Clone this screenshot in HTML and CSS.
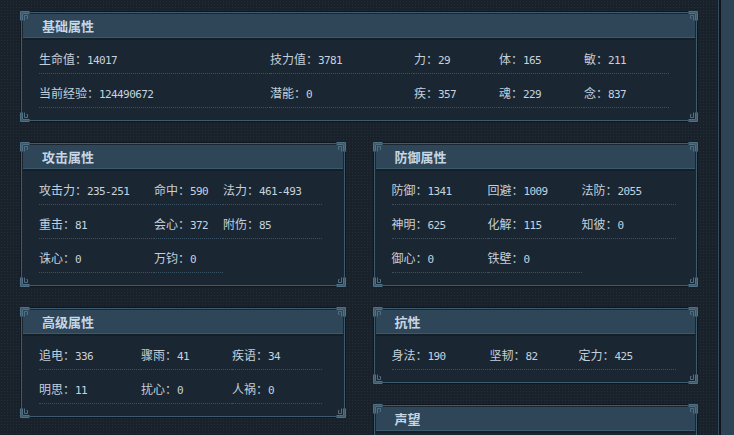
FILE: index.html
```html
<!DOCTYPE html>
<html lang="zh">
<head>
<meta charset="utf-8">
<title>属性</title>
<link rel="stylesheet" href="styles.css">
</head>
<body>
<svg class="defs" width="0" height="0">
  <symbol id="fret" viewBox="0 0 10 10">
    <path d="M0.5 9.5V0.5H9.5M2.5 9.5V2.5H9.5M4.5 9.5V4.5H7.5V7.5H6.5" fill="none" stroke="#4f7085" stroke-width="1"/>
  </symbol>
</svg>
<div class="page">
  <div class="main">
    <section class="panel">
      <svg class="corner tl"><use href="#fret"/></svg><svg class="corner tr"><use href="#fret"/></svg><svg class="corner bl"><use href="#fret"/></svg><svg class="corner br"><use href="#fret"/></svg>
      <h2 class="ph">基础属性</h2>
      <div class="grid g-basic">
        <div class="cell"><span class="k">生命值：</span><span class="v">14017</span></div>
        <div class="cell"><span class="k">技力值：</span><span class="v">3781</span></div>
        <div class="cell"><span class="k">力：</span><span class="v">29</span></div>
        <div class="cell"><span class="k">体：</span><span class="v">165</span></div>
        <div class="cell"><span class="k">敏：</span><span class="v">211</span></div>
        <div class="cell"><span class="k">当前经验：</span><span class="v">124490672</span></div>
        <div class="cell"><span class="k">潜能：</span><span class="v">0</span></div>
        <div class="cell"><span class="k">疾：</span><span class="v">357</span></div>
        <div class="cell"><span class="k">魂：</span><span class="v">229</span></div>
        <div class="cell"><span class="k">念：</span><span class="v">837</span></div>
      </div>
    </section>
    <div class="cols">
      <div class="col">
        <section class="panel">
          <svg class="corner tl"><use href="#fret"/></svg><svg class="corner tr"><use href="#fret"/></svg><svg class="corner bl"><use href="#fret"/></svg><svg class="corner br"><use href="#fret"/></svg>
          <h2 class="ph">攻击属性</h2>
          <div class="grid g-attack">
            <div class="cell"><span class="k">攻击力：</span><span class="v">235-251</span></div>
            <div class="cell"><span class="k">命中：</span><span class="v">590</span></div>
            <div class="cell"><span class="k">法力：</span><span class="v">461-493</span></div>
            <div class="cell"><span class="k">重击：</span><span class="v">81</span></div>
            <div class="cell"><span class="k">会心：</span><span class="v">372</span></div>
            <div class="cell"><span class="k">附伤：</span><span class="v">85</span></div>
            <div class="cell"><span class="k">诛心：</span><span class="v">0</span></div>
            <div class="cell"><span class="k">万钧：</span><span class="v">0</span></div>
          </div>
        </section>
        <section class="panel">
          <svg class="corner tl"><use href="#fret"/></svg><svg class="corner tr"><use href="#fret"/></svg><svg class="corner bl"><use href="#fret"/></svg><svg class="corner br"><use href="#fret"/></svg>
          <h2 class="ph">高级属性</h2>
          <div class="grid g-adv">
            <div class="cell"><span class="k">追电：</span><span class="v">336</span></div>
            <div class="cell"><span class="k">骤雨：</span><span class="v">41</span></div>
            <div class="cell"><span class="k">疾语：</span><span class="v">34</span></div>
            <div class="cell"><span class="k">明思：</span><span class="v">11</span></div>
            <div class="cell"><span class="k">扰心：</span><span class="v">0</span></div>
            <div class="cell"><span class="k">人祸：</span><span class="v">0</span></div>
          </div>
        </section>
      </div>
      <div class="col">
        <section class="panel">
          <svg class="corner tl"><use href="#fret"/></svg><svg class="corner tr"><use href="#fret"/></svg><svg class="corner bl"><use href="#fret"/></svg><svg class="corner br"><use href="#fret"/></svg>
          <h2 class="ph">防御属性</h2>
          <div class="grid g-def">
            <div class="cell"><span class="k">防御：</span><span class="v">1341</span></div>
            <div class="cell"><span class="k">回避：</span><span class="v">1009</span></div>
            <div class="cell"><span class="k">法防：</span><span class="v">2055</span></div>
            <div class="cell"><span class="k">神明：</span><span class="v">625</span></div>
            <div class="cell"><span class="k">化解：</span><span class="v">115</span></div>
            <div class="cell"><span class="k">知彼：</span><span class="v">0</span></div>
            <div class="cell"><span class="k">御心：</span><span class="v">0</span></div>
            <div class="cell"><span class="k">铁壁：</span><span class="v">0</span></div>
          </div>
        </section>
        <section class="panel">
          <svg class="corner tl"><use href="#fret"/></svg><svg class="corner tr"><use href="#fret"/></svg><svg class="corner bl"><use href="#fret"/></svg><svg class="corner br"><use href="#fret"/></svg>
          <h2 class="ph">抗性</h2>
          <div class="grid g-res">
            <div class="cell"><span class="k">身法：</span><span class="v">190</span></div>
            <div class="cell"><span class="k">坚韧：</span><span class="v">82</span></div>
            <div class="cell"><span class="k">定力：</span><span class="v">425</span></div>
          </div>
        </section>
        <section class="panel panel-tall">
          <svg class="corner tl"><use href="#fret"/></svg><svg class="corner tr"><use href="#fret"/></svg>
          <h2 class="ph">声望</h2>
        </section>
      </div>
    </div>
  </div>
  <div class="strip"></div>
</div>
</body>
</html>
```
FILE: styles.css
```css
html, body {
  margin: 0;
  padding: 0;
  height: 100%;
  overflow: hidden;
}
body {
  background-color: #19212b;
  background-image: radial-gradient(circle, #232e3a 0.7px, transparent 1px);
  background-size: 3px 3px;
  font-family: "Noto Sans CJK SC", "Noto Sans", sans-serif;
  color: #bfcedb;
}
.defs {
  position: absolute;
  width: 0;
  height: 0;
}
.page {
  display: flex;
  min-height: 100%;
}
.main {
  width: 676px;
  padding: 12px 21px 0 21px;
  flex: none;
}
.strip {
  flex: 1;
  border-left: 1px solid #354c5d;
  box-shadow: inset 2px 0 0 #0f151b;
  background: #2d4456;
}
.panel {
  position: relative;
  border: 1px solid #3e5b6e;
  padding: 1px 1px 12px;
  background: #1b2633;
  box-shadow: 0 0 0 1px #10171e;
}
.panel-tall {
  height: 60px;
}
.ph {
  margin: 0;
  height: 24px;
  line-height: 24px;
  padding-left: 19px;
  background: #2e4657;
  border-bottom: 2px solid #142029;
  box-shadow: inset 0 -1px 0 #3d5a6c;
  font-size: 13px;
  font-weight: bold;
  color: #c6d6e4;
}
.corner {
  position: absolute;
  width: 10px;
  height: 10px;
}
.corner.tl { top: -2px; left: -2px; }
.corner.tr { top: -2px; right: -2px; transform: scaleX(-1); }
.corner.bl { bottom: -2px; left: -2px; transform: scaleY(-1); }
.corner.br { bottom: -2px; right: -2px; transform: scale(-1, -1); }
.grid {
  display: grid;
  padding-left: 16px;
}
.g-basic { grid-template-columns: 231px 144px 85px 85px 85px; }
.g-attack { grid-template-columns: 115px 69px 99px; }
.g-adv { grid-template-columns: 102px 91px 90px; }
.g-def { grid-template-columns: 96px 94px 94px; }
.g-res { grid-template-columns: 98px 89px 97px; }
.cell {
  height: 20px;
  line-height: 20px;
  padding: 7px 0 6px;
  border-bottom: 1px dotted #3a5164;
  white-space: nowrap;
}
.k {
  font-size: 12px;
  color: #c2d0dc;
}
.v {
  font-family: "DejaVu Sans Mono", "Liberation Mono", monospace;
  font-size: 11px;
  letter-spacing: -0.6px;
  color: #c6d3de;
}
.cols {
  display: flex;
  gap: 29px;
  margin-top: 22px;
}
.col {
  width: 324px;
  display: flex;
  flex-direction: column;
  gap: 22px;
}
```
